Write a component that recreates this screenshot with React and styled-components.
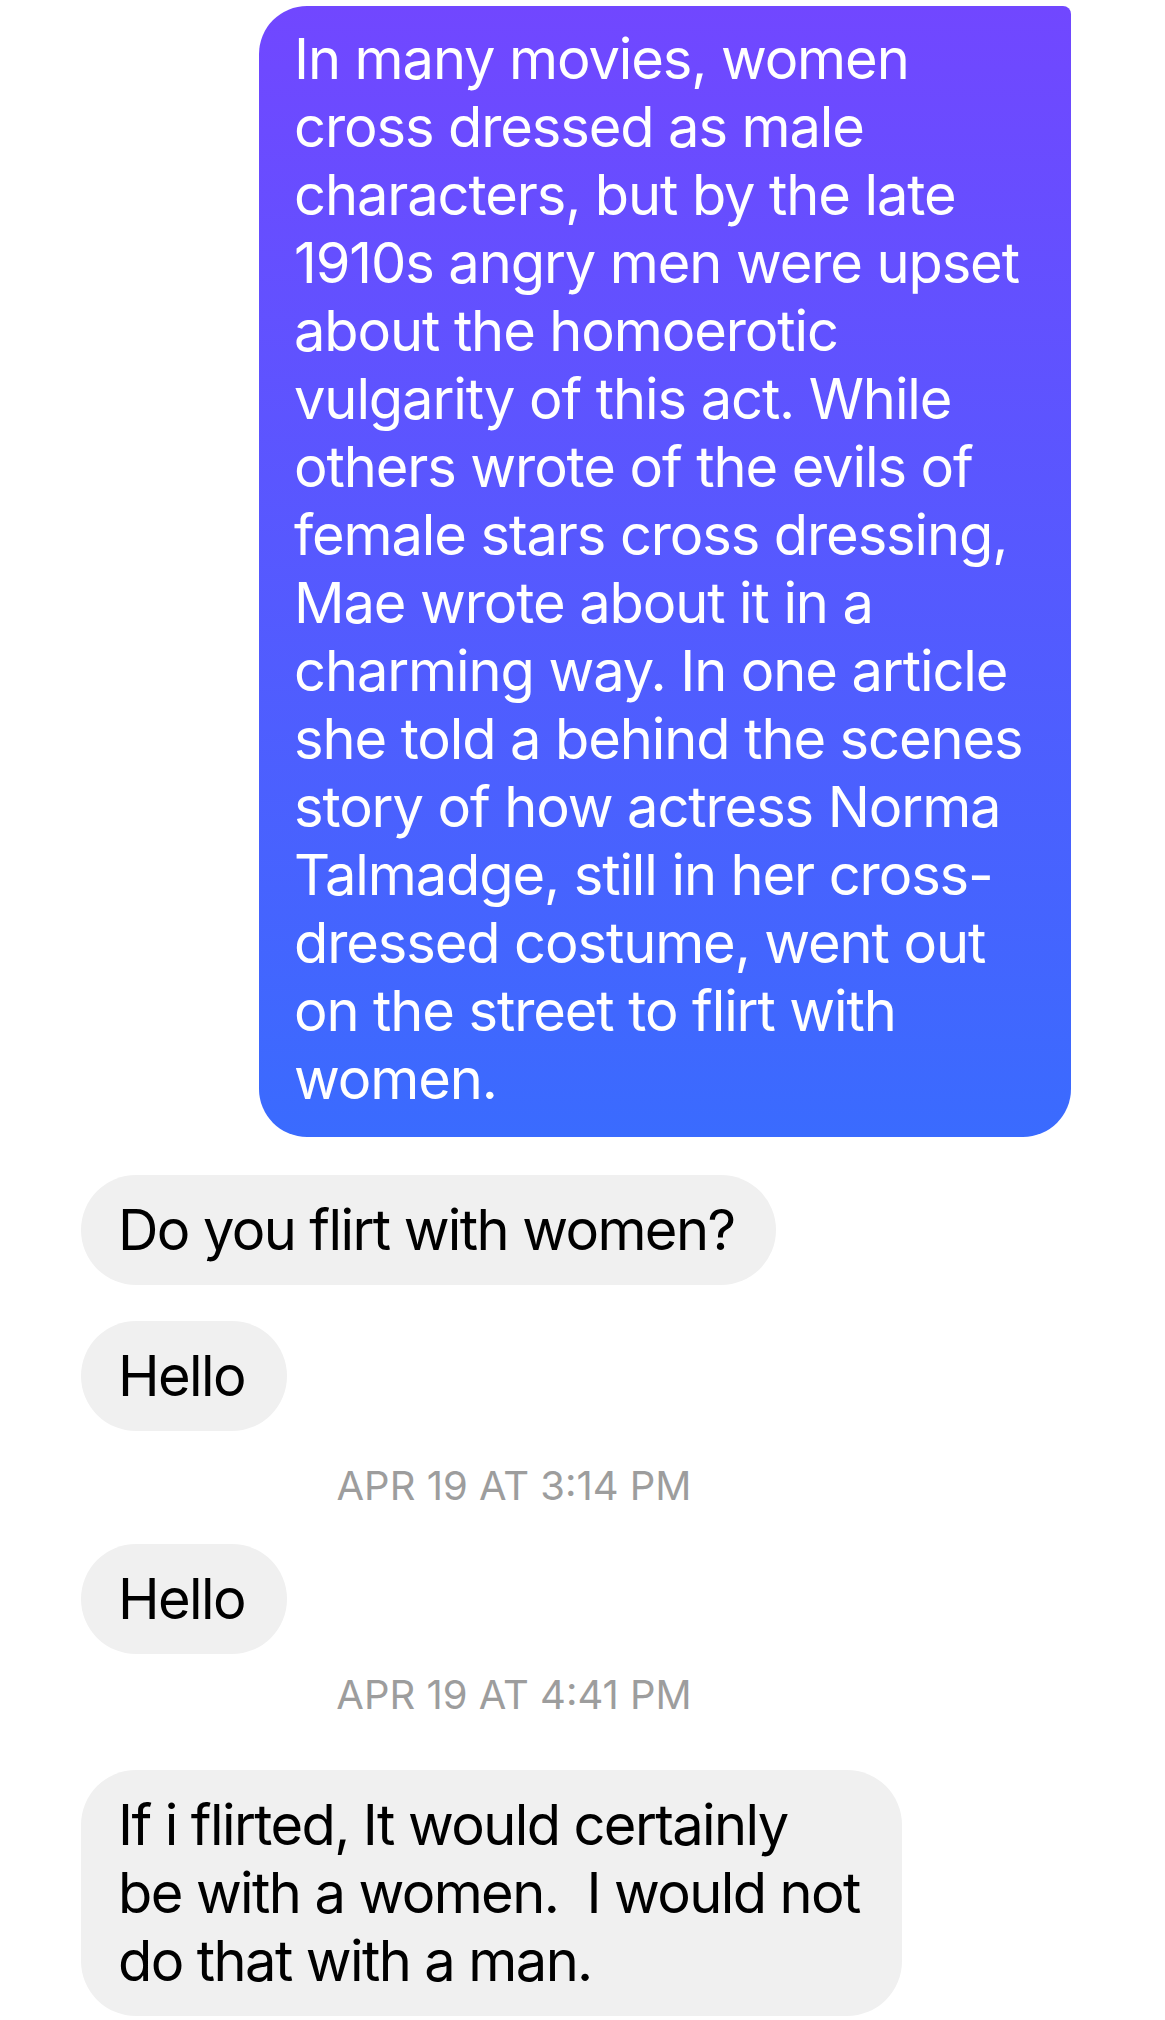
import styled, { createGlobalStyle } from "styled-components";

const GlobalStyle = createGlobalStyle`
  body {
    margin: 0;
    background: #ffffff;
    font-family: Inter, "Noto Sans", "Liberation Sans", sans-serif;
  }
`;

const outgoing = [
  "In many movies, women",
  "cross dressed as male",
  "characters, but by the late",
  "1910s angry men were upset",
  "about the homoerotic",
  "vulgarity of this act. While",
  "others wrote of the evils of",
  "female stars cross dressing,",
  "Mae wrote about it in a",
  "charming way. In one article",
  "she told a behind the scenes",
  "story of how actress Norma",
  "Talmadge, still in her cross-",
  "dressed costume, went out",
  "on the street to flirt with",
  "women.",
];

const thread = [
  { kind: "in", gap: 38, text: "Do you flirt with women?" },
  { kind: "in", gap: 36, text: "Hello" },
  { kind: "stamp", gap: 31, text: "APR 19 AT 3:14 PM" },
  { kind: "in", gap: 34, text: "Hello" },
  { kind: "stamp", gap: 17, text: "APR 19 AT 4:41 PM" },
  {
    kind: "in",
    gap: 51,
    text: "If i flirted, It would certainly\nbe with a women.  I would not\ndo that with a man.",
  },
];

function App() {
  return (
    <>
      <GlobalStyle />
      <Thread>
        <OutRow>
          <OutBubble>{outgoing.join("\n")}</OutBubble>
        </OutRow>
        {thread.map((item, i) =>
          item.kind === "stamp" ? (
            <Stamp key={i} $gap={item.gap}>
              {item.text}
            </Stamp>
          ) : (
            <InRow key={i} $gap={item.gap}>
              <InBubble>{item.text}</InBubble>
            </InRow>
          )
        )}
      </Thread>
    </>
  );
}

export default App;

const Thread = styled.div`
  display: flex;
  flex-direction: column;
  width: 1165px;
  height: 2020px;
  overflow: hidden;
`;

const OutRow = styled.div`
  display: flex;
  justify-content: flex-end;
  padding-right: 94px;
  margin-top: 6px;
  flex-shrink: 0;
`;

const OutBubble = styled.div`
  width: 812px;
  box-sizing: border-box;
  padding: 19px 36px 24px 35px;
  border-radius: 48px 8px 48px 48px;
  background: linear-gradient(180deg, #7147ff 0%, #3a6bfe 100%);
  color: #ffffff;
  font-size: 56px;
  line-height: 68px;
  letter-spacing: -1.1px;
  white-space: pre;
`;

const InRow = styled.div`
  display: flex;
  padding-left: 81px;
  margin-top: ${(p) => p.$gap}px;
  flex-shrink: 0;
`;

const InBubble = styled.div`
  padding: 21px 42px 21px 37px;
  border-radius: 55px;
  background: #f0f0f0;
  color: #000000;
  font-size: 56px;
  line-height: 68px;
  letter-spacing: -1.6px;
  white-space: pre;
`;

const Stamp = styled.div`
  width: 1028px;
  margin-top: ${(p) => p.$gap}px;
  text-align: center;
  color: #9d9d9d;
  font-size: 40px;
  line-height: 48px;
  flex-shrink: 0;
`;
